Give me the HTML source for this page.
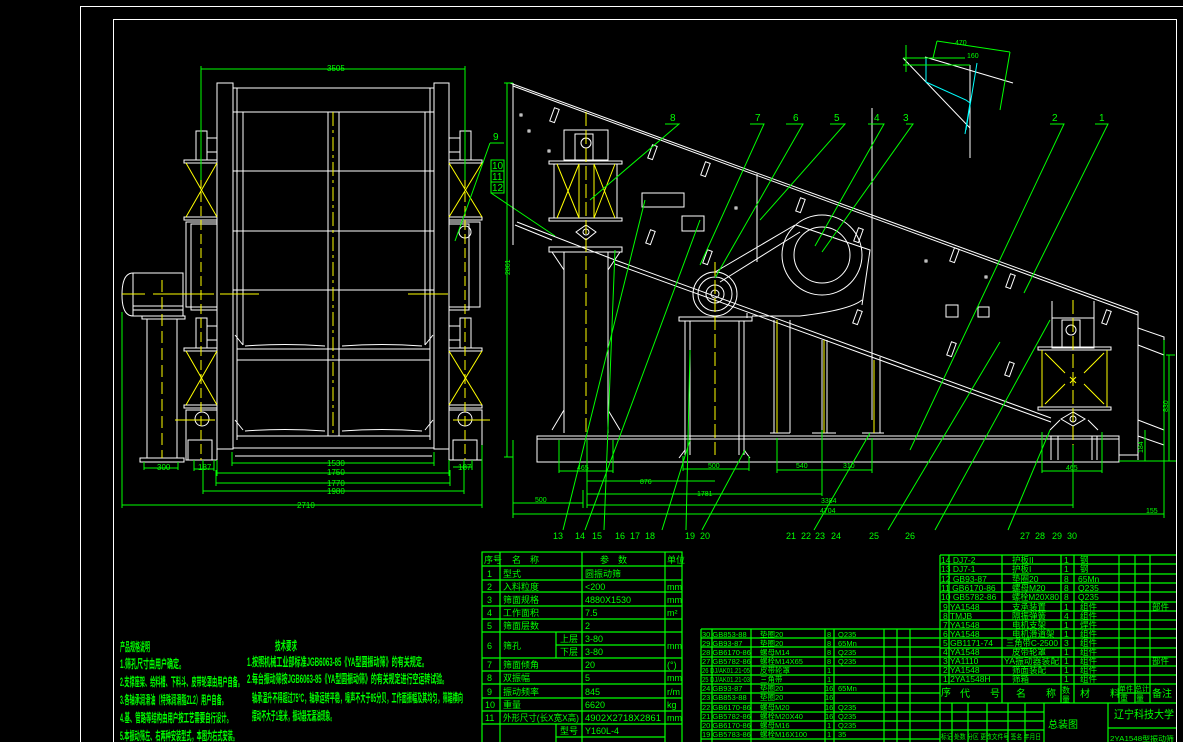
<!DOCTYPE html>
<html><head><meta charset="utf-8"><style>
html,body{margin:0;padding:0;background:#000;width:1183px;height:742px;overflow:hidden}
svg{display:block}
text{font-family:"Liberation Sans","Noto Sans CJK SC",sans-serif;fill:#00ff00}
.n text{font-weight:bold}
</style></head><body>
<svg width="1183" height="742" viewBox="0 0 1183 742" xmlns="http://www.w3.org/2000/svg">
<rect width="1183" height="742" fill="#000"/>
<g stroke="#fff" fill="none" stroke-width="1">
<path d="M80.5 742V6.5H1183"/>
<path d="M113.5 742V19.5H1176.5V742"/>
</g>

<!-- ============ END VIEW ============ -->
<g stroke="#fff" fill="none" stroke-width="1">
<rect x="217" y="83" width="16" height="366"/>
<rect x="434" y="83" width="15" height="366"/>
<path d="M233 88H434M233 112H434M237 88V440M430 88V440M243 112V345M425 112V345"/>
<path d="M233 171H434M233 231H434M233 290H434M237 349H430M237 360H430M237 436H430M233 448H434M235 456H432"/>
<path d="M328 112V436M339 112V436"/>
<path d="M243 345l-8-10M425 345l8-10M243 430l-8-10M425 430l8-10"/>
<path d="M245 346q40-3 80 0M342 346q40-3 80 0M245 431q40-3 80 0M342 431q40-3 80 0"/>
<rect x="184" y="160" width="33" height="3"/><rect x="184" y="217" width="33" height="3"/>
<rect x="184" y="348" width="33" height="3"/><rect x="184" y="405" width="33" height="3"/>
<rect x="196" y="131" width="11" height="29"/><rect x="196" y="318" width="11" height="30"/>
<rect x="207" y="138" width="10" height="14"/><rect x="207" y="326" width="10" height="14"/>
<rect x="186" y="222" width="31" height="85"/><rect x="191" y="224" width="26" height="86"/>
<rect x="186" y="410" width="31" height="50"/>
<circle cx="202" cy="419" r="7"/>
<rect x="188" y="440" width="24" height="20"/>
<rect x="449" y="160" width="33" height="3"/><rect x="449" y="217" width="33" height="3"/>
<rect x="449" y="348" width="33" height="3"/><rect x="449" y="405" width="33" height="3"/>
<rect x="460" y="131" width="11" height="29"/><rect x="460" y="318" width="11" height="30"/>
<rect x="449" y="138" width="11" height="14"/><rect x="449" y="326" width="11" height="14"/>
<rect x="449" y="222" width="31" height="85"/><rect x="449" y="224" width="20" height="86"/>
<rect x="449" y="410" width="33" height="50"/>
<circle cx="465" cy="419" r="7"/><circle cx="465" cy="232" r="6"/>
<rect x="453" y="440" width="24" height="20"/>
<path d="M133 273H183V316H133Q122 316 122 295Q122 273 133 273Z"/>
<path d="M133 273V316M133 306H183M133 310H183"/>
<rect x="142" y="316" width="43" height="3"/>
<rect x="147" y="319" width="30" height="139"/>
<rect x="140" y="458" width="44" height="4"/>
</g>
<g stroke="#ffff00" fill="none" stroke-width="1">
<path d="M333 112V436" stroke-dasharray="14 4 3 4"/>
<path d="M186 163L217 217M217 163L186 217M186 351L217 405M217 351L186 405"/>
<path d="M449 163L482 217M482 163L449 217M449 351L482 405M482 351L449 405"/>
<path d="M201 150V460M465 150V460" stroke-dasharray="10 4"/>
<path d="M122 294H145M153 294H214M220 294H259M408 294H448M175 420H215M453 420H490"/>
<path d="M162 280V458" stroke-dasharray="12 5"/>
</g>
<g stroke="#00ff00" fill="none" stroke-width="1">
<path d="M201 69H465M201 66V180M465 66V180"/>
<path d="M122 505H482M122 312V508M482 445V508"/>
<path d="M232 463H434M232 452V466M434 452V466"/>
<path d="M217 473H449M217 460V476M449 460V476"/>
<path d="M216 483H450M216 470V486M450 470V486"/>
<path d="M203 491H464M203 460V494M464 460V494"/>
<path d="M144 468H178M144 462V470M178 462V470M194 469H214M194 460V471M214 460V471M453 467H472M472 460V470"/>
<path d="M490 143H504M490 143L455 241M491 160H504V193H491ZM491 171H504M491 182H504M491 193L555 236"/>
</g>
<g font-size="8">
<text x="327" y="71">3505</text><text x="297" y="508">2710</text>
<text x="327" y="466">1530</text><text x="327" y="475">1750</text><text x="327" y="486">1770</text><text x="327" y="494">1980</text>
<text x="157" y="470">300</text><text x="198" y="470">187</text><text x="458" y="470">187</text>
</g>
<g font-size="10"><text x="493" y="140">9</text><text x="492" y="169">10</text><text x="492" y="180">11</text><text x="492" y="191">12</text></g>

<!-- ============ SIDE VIEW ============ -->
<g stroke="#fff" fill="none" stroke-width="1">
<path d="M510 83L1138 312M513 86L1138 315M513 83V245M1138 312V460"/>
<path d="M517 222L615 260M615 260L1051 418M615 264L1051 422M515 225L552 240"/>
<path d="M1138 328L1164 337V355M1138 345L1164 355M1138 420L1164 430V445M1138 436L1164 445"/>
<rect x="537" y="436" width="582" height="26"/>
<path d="M537 439H1119M1119 455H1138"/>
<rect x="564" y="130" width="44" height="30"/>
<rect x="575" y="134" width="18" height="26"/>
<circle cx="586" cy="143" r="5"/>
<rect x="549" y="161" width="73" height="3"/><rect x="549" y="218" width="73" height="3"/>
<rect x="554" y="164" width="63" height="54"/>
<path d="M576 232L586 225L596 232L586 240Z"/><circle cx="586" cy="232" r="3"/>
<rect x="549" y="247" width="73" height="5"/>
<path d="M564 252V433M608 252V433M552 252L564 270M620 252L608 270M552 430L564 410M620 430L608 410"/>
<circle cx="715" cy="294" r="22"/><circle cx="715" cy="294" r="17"/><circle cx="715" cy="294" r="9"/><circle cx="715" cy="294" r="4"/>
<rect x="679" y="317" width="73" height="4"/>
<path d="M685 321V455M744 321V455M690 321V455M739 321V455M679 458L685 450M750 458L744 450"/>
<path d="M747 313V318"/>
<path d="M715 272L795 225M720 282L800 232"/>
<circle cx="822" cy="255" r="40"/><circle cx="822" cy="255" r="28"/>
<path d="M796 225L870 250L862 305M752 316H800Q850 310 862 300"/>
<path d="M774 320V433M822 340V433M872 108V420M880 357V433M790 320V433M827 340V433"/>
<path d="M770 433H790M812 433H836M862 433H884"/>
<path d="M757 174V262"/>
<rect x="1052" y="318" width="42" height="30"/>
<rect x="1062" y="320" width="18" height="28"/>
<circle cx="1071" cy="330" r="5"/>
<rect x="1038" y="347" width="73" height="3"/><rect x="1038" y="407" width="73" height="3"/>
<rect x="1042" y="350" width="65" height="57"/>
<path d="M1061 419L1073 412L1085 419L1073 426Z"/><circle cx="1073" cy="419" r="3"/>
<path d="M1052 301V347M1094 301V347M1050 430L1060 420M1098 430L1088 420M1051 436V460M1097 436V460M1058 436V460M1092 436V460"/>
<g>
<rect x="552" y="108" width="5" height="14" transform="rotate(20 554 115)"/>
<rect x="650" y="145" width="5" height="14" transform="rotate(20 652 152)"/>
<rect x="703" y="162" width="5" height="14" transform="rotate(20 705 169)"/>
<rect x="648" y="230" width="5" height="14" transform="rotate(20 650 237)"/>
<rect x="705" y="250" width="5" height="14" transform="rotate(20 707 257)"/>
<rect x="798" y="198" width="5" height="14" transform="rotate(20 800 205)"/>
<rect x="856" y="228" width="5" height="14" transform="rotate(20 858 235)"/>
<rect x="855" y="310" width="5" height="14" transform="rotate(20 857 317)"/>
<rect x="952" y="248" width="5" height="14" transform="rotate(20 954 255)"/>
<rect x="1008" y="274" width="5" height="14" transform="rotate(20 1010 281)"/>
<rect x="949" y="342" width="5" height="14" transform="rotate(20 951 349)"/>
<rect x="1007" y="362" width="5" height="14" transform="rotate(20 1009 369)"/>
<rect x="1104" y="310" width="5" height="14" transform="rotate(20 1106 317)"/>
<rect x="642" y="193" width="42" height="14"/><rect x="682" y="216" width="22" height="15"/>
<rect x="946" y="305" width="12" height="12"/><rect x="978" y="307" width="11" height="10"/>
<rect x="520" y="114" width="2" height="2"/><rect x="528" y="130" width="2" height="2"/><rect x="548" y="150" width="2" height="2"/>
<rect x="735" y="207" width="2" height="2"/><rect x="925" y="260" width="2" height="2"/><rect x="985" y="276" width="2" height="2"/>
</g>
<path d="M925 57L1013 83M903 58L970 128M970 65V158"/>
</g>
<g stroke="#00ffff" fill="none" stroke-width="1"><path d="M916 58H926V82L966 100L970 103L965 134M977 63L966 130"/></g>
<g stroke="#ffff00" fill="none" stroke-width="1">
<path d="M586 112V433M715 262V455M1073 300V460" stroke-dasharray="14 4"/>
<path d="M579 164V218M594 164V218M557 164L579 218M579 164L557 218M594 164L615 218M615 164L594 218"/>
<path d="M1042 350V407M1107 350V407M1045 353L1065 373M1104 353L1084 373M1045 404L1065 384M1104 404L1084 384M1070 377l6 6M1076 377l-6 6"/>
<path d="M777 320V433M824 340V433M874 360V433"/>
</g>
<g stroke="#00ff00" fill="none" stroke-width="1">
<path d="M507 83V457M504 83H513M504 457H513"/>
<path d="M513 514H1164M513 440V518M1164 340V518"/>
<path d="M513 503H583M583 490V508"/>
<path d="M587 505H1073M587 440V508M1073 445V508"/>
<path d="M587 494H822M822 430V496M587 481H715"/>
<path d="M559 471H613M559 440V473M613 440V473M683 469H749M683 456V471M749 456V471M777 470H872M777 438V473M872 438V473M1042 471H1102M1042 432V473M1102 432V473"/>
<path d="M1119 461H1176M1169 355V461M1166 355H1175M1145 430V461"/>
<path d="M937 41L1010 52M937 41L933 58M1010 52L1000 110M903 58H965M903 65H970M906 45V72"/>
<path d="M665 124H679L590 200M750 124H764L700 265M786 124H803L715 278M830 124H845L760 220M868 124H884L815 246M906 124H913L822 252M1050 124H1064L910 450M1095 124H1108L1024 293"/>
<path d="M563 530L645 200M585 530L700 220M604 530L615 250M662 530L690 440M686 530L690 350M702 530L745 450M814 530L870 433M888 530L1000 342M935 530L1050 320M1008 530L1050 430"/>
</g>
<g font-size="10">
<text x="670" y="121">8</text><text x="755" y="121">7</text><text x="793" y="121">6</text><text x="834" y="121">5</text>
<text x="874" y="121">4</text><text x="903" y="121">3</text><text x="1052" y="121">2</text><text x="1099" y="121">1</text>
</g>
<g font-size="9">
<text x="553" y="539">13</text><text x="575" y="539">14</text><text x="592" y="539">15</text><text x="615" y="539">16</text><text x="630" y="539">17</text><text x="645" y="539">18</text>
<text x="685" y="539">19</text><text x="700" y="539">20</text><text x="786" y="539">21</text><text x="801" y="539">22</text><text x="815" y="539">23</text><text x="831" y="539">24</text>
<text x="869" y="539">25</text><text x="905" y="539">26</text><text x="1020" y="539">27</text><text x="1035" y="539">28</text><text x="1052" y="539">29</text><text x="1067" y="539">30</text>
</g>
<g font-size="7">
<text x="535" y="502">500</text><text x="640" y="484">876</text><text x="697" y="496">1781</text><text x="821" y="503">3384</text><text x="820" y="513">4704</text>
<text x="577" y="470">465</text><text x="708" y="468">500</text><text x="796" y="468">540</text><text x="843" y="468">310</text><text x="1066" y="470">465</text>
<text x="1146" y="513">155</text><text x="955" y="45">470</text><text x="967" y="58">160</text>
<text x="0" y="0" transform="translate(510 275) rotate(-90)">2861</text>
<text x="0" y="0" transform="translate(1168 412) rotate(-90)">830</text>
<text x="0" y="0" transform="translate(1143 453) rotate(-90)">184</text>
</g>

<!-- ============ NOTES ============ -->
<g font-size="12" class="n">
<text x="120" y="651" textLength="30" lengthAdjust="spacingAndGlyphs">产品规格说明</text>
<text x="120" y="668" textLength="65" lengthAdjust="spacingAndGlyphs">1.筛孔尺寸由用户确定。</text>
<text x="120" y="686" textLength="123" lengthAdjust="spacingAndGlyphs">2.支撑座架、给料槽、下料斗、皮带轮罩由用户自备。</text>
<text x="120" y="704" textLength="107" lengthAdjust="spacingAndGlyphs">3.各轴承润滑油（特殊润滑脂ZL2）用户自备。</text>
<text x="120" y="722" textLength="112" lengthAdjust="spacingAndGlyphs">4.基、管路等结构由用户按工艺需要自行设计。</text>
<text x="120" y="740" textLength="118" lengthAdjust="spacingAndGlyphs">5.本振动筛左、右两种安装型式，本图为右式安装。</text>
<text x="275" y="650" textLength="22" lengthAdjust="spacingAndGlyphs">技术要求</text>
<text x="247" y="666" textLength="181" lengthAdjust="spacingAndGlyphs">1.按照机械工业部标准JGB6063-85《YA型圆振动筛》的有关规定。</text>
<text x="247" y="683" textLength="201" lengthAdjust="spacingAndGlyphs">2.每台振动筛按JGB6063-85《YA型圆振动筛》的有关规定进行空运转试验。</text>
<text x="252" y="702" textLength="211" lengthAdjust="spacingAndGlyphs">轴承温升不得超过75°C，轴承运转平稳，噪声不大于85分贝，工作面振幅及其均匀，筛箱横向</text>
<text x="252" y="720" textLength="83" lengthAdjust="spacingAndGlyphs">摆动不大于1毫米，振动器无漏油现象。</text>
</g>

<!-- ============ TABLE LEFT ============ -->
<g stroke="#00ff00" fill="none" stroke-width="1.2">
<rect x="482" y="552" width="200" height="200"/>
<path d="M482 566H682M482 580H682M482 592H682M482 606H682M482 619H682M482 632H682M556 645H665M482 658H682M482 671H682M482 684H682M482 698H682M482 711H682M482 724H682M556 737H665"/>
<path d="M500 552V752M582 552V658M582 658V752M665 552V752M556 632V658M556 724V752"/>
</g>
<g font-size="9">
<text x="484" y="563">序号</text><text x="512" y="563">名　称</text><text x="600" y="563">参　数</text><text x="667" y="563">单位</text>
<text x="487" y="577">1</text><text x="503" y="577">型式</text><text x="585" y="577">圆振动筛</text>
<text x="487" y="590">2</text><text x="503" y="590">入料粒度</text><text x="585" y="590">&lt;200</text><text x="667" y="590">mm</text>
<text x="487" y="603">3</text><text x="503" y="603">筛面规格</text><text x="585" y="603">4880X1530</text><text x="667" y="603">mm</text>
<text x="487" y="616">4</text><text x="503" y="616">工作面积</text><text x="585" y="616">7.5</text><text x="667" y="616">m²</text>
<text x="487" y="629">5</text><text x="503" y="629">筛面层数</text><text x="585" y="629">2</text>
<text x="487" y="649">6</text><text x="503" y="649">筛孔</text><text x="560" y="642">上层</text><text x="560" y="655">下层</text><text x="585" y="642">3-80</text><text x="585" y="655">3-80</text><text x="667" y="649">mm</text>
<text x="487" y="668">7</text><text x="503" y="668">筛面倾角</text><text x="585" y="668">20</text><text x="667" y="668">(°)</text>
<text x="487" y="681">8</text><text x="503" y="681">双振幅</text><text x="585" y="681">5</text><text x="667" y="681">mm</text>
<text x="487" y="695">9</text><text x="503" y="695">振动频率</text><text x="585" y="695">845</text><text x="667" y="695">r/m</text>
<text x="485" y="708">10</text><text x="503" y="708">重量</text><text x="585" y="708">6620</text><text x="667" y="708">kg</text>
<text x="485" y="721">11</text><text x="503" y="721" textLength="76" lengthAdjust="spacingAndGlyphs">外形尺寸(长X宽X高)</text><text x="585" y="721" textLength="76" lengthAdjust="spacingAndGlyphs">4902X2718X2861</text><text x="667" y="721">mm</text>
<text x="560" y="734">型号</text><text x="585" y="734">Y160L-4</text>
</g>

<!-- ============ TABLE MIDDLE ============ -->
<g stroke="#00ff00" fill="none" stroke-width="1.2">
<path d="M701 629H940M701 638H940M701 647H940M701 657H940M701 666H940M701 675H940M701 684H940M701 693H940M701 703H940M701 712H940M701 721H940M701 730H940M701 739H940"/>
<path d="M701 629V742M712 629V742M751 629V742M825 629V742M834 629V742M884 629V742M897 629V742M910 629V742"/>
</g>
<g font-size="7.5">
<text x="702" y="637">30 GB853-88</text><text x="760" y="637">垫圈20</text><text x="827" y="637">8</text><text x="838" y="637">Q235</text>
<text x="702" y="646">29 GB93-87</text><text x="760" y="646">垫圈20</text><text x="827" y="646">8</text><text x="838" y="646">65Mn</text>
<text x="702" y="655">28 GB6170-86</text><text x="760" y="655">螺母M14</text><text x="827" y="655">8</text><text x="838" y="655">Q235</text>
<text x="702" y="664">27 GB5782-86</text><text x="760" y="664">螺栓M14X65</text><text x="827" y="664">8</text><text x="838" y="664">Q235</text>
<text x="702" y="673" textLength="48" lengthAdjust="spacingAndGlyphs">26 DJ/AK01.21-05</text><text x="760" y="673">皮带轮罩</text><text x="827" y="673">1</text>
<text x="702" y="682" textLength="48" lengthAdjust="spacingAndGlyphs">25 DJ/AK01.21-03</text><text x="760" y="682">三角带</text><text x="827" y="682">1</text>
<text x="702" y="691">24 GB93-87</text><text x="760" y="691">垫圈20</text><text x="825" y="691">16</text><text x="838" y="691">65Mn</text>
<text x="702" y="700">23 GB853-88</text><text x="760" y="700">垫圈20</text><text x="825" y="700">16</text>
<text x="702" y="710">22 GB6170-86</text><text x="760" y="710">螺母M20</text><text x="825" y="710">16</text><text x="838" y="710">Q235</text>
<text x="702" y="719">21 GB5782-86</text><text x="760" y="719">螺栓M20X40</text><text x="825" y="719">16</text><text x="838" y="719">Q235</text>
<text x="702" y="728">20 GB6170-86</text><text x="760" y="728">螺母M16</text><text x="827" y="728">1</text><text x="838" y="728">Q235</text>
<text x="702" y="737">19 GB5783-86</text><text x="760" y="737">螺栓M16X100</text><text x="827" y="737">1</text><text x="838" y="737">35</text>
</g>

<!-- ============ TABLE RIGHT ============ -->
<g stroke="#00ff00" fill="none" stroke-width="1.2">
<path d="M940 555H1176M940 564H1176M940 574H1176M940 583H1176M940 592H1176M940 602H1176M940 611H1176M940 620H1176M940 629H1176M940 638H1176M940 648H1176M940 657H1176M940 666H1176M940 675H1176M940 684H1176M1119 693H1150M940 703H1176"/>
<path d="M940 555V742M949 555V684M1002 555V703M1061 555V703M1074 555V703M1119 555V703M1135 555V703M1150 555V703"/>
<path d="M940 712H1044M940 721H1044M940 730H1044M952 703V742M968 703V742M987 703V742M1008 703V742M1025 703V742M1044 703V742M1108 703V742M1108 728H1176"/>
</g>
<g font-size="8.5">
<text x="941" y="563">14 DJ7-2</text><text x="1012" y="563">护板II</text><text x="1064" y="563">1</text><text x="1080" y="563">钢</text>
<text x="941" y="572">13 DJ7-1</text><text x="1012" y="572">护板I</text><text x="1064" y="572">1</text><text x="1080" y="572">钢</text>
<text x="941" y="582">12 GB93-87</text><text x="1012" y="582">垫圈20</text><text x="1064" y="582">8</text><text x="1078" y="582">65Mn</text>
<text x="941" y="591">11 GB6170-86</text><text x="1012" y="591">螺母M20</text><text x="1064" y="591">8</text><text x="1078" y="591">Q235</text>
<text x="941" y="600">10 GB5782-86</text><text x="1012" y="600" textLength="47" lengthAdjust="spacingAndGlyphs">螺栓M20X80</text><text x="1064" y="600">8</text><text x="1078" y="600">Q235</text>
<text x="943" y="610">9 YA1548</text><text x="1012" y="610">支承装置</text><text x="1064" y="610">1</text><text x="1080" y="610">组件</text><text x="1152" y="610">部件</text>
<text x="943" y="619">8 TMJB</text><text x="1012" y="619">隔振弹簧</text><text x="1064" y="619">4</text><text x="1080" y="619">组件</text>
<text x="943" y="628">7 YA1548</text><text x="1012" y="628">电机支架</text><text x="1064" y="628">1</text><text x="1080" y="628">焊件</text>
<text x="943" y="637">6 YA1548</text><text x="1012" y="637">电机滑道架</text><text x="1064" y="637">1</text><text x="1080" y="637">组件</text>
<text x="943" y="646">5 GB1171-74</text><text x="1006" y="646" textLength="52" lengthAdjust="spacingAndGlyphs">三角带C-2500</text><text x="1064" y="646">3</text><text x="1080" y="646">组件</text>
<text x="943" y="655">4 YA1548</text><text x="1012" y="655">皮带轮罩</text><text x="1064" y="655">1</text><text x="1080" y="655">组件</text>
<text x="943" y="664">3 YA1110</text><text x="1004" y="664" textLength="55" lengthAdjust="spacingAndGlyphs">YA振动器装配</text><text x="1064" y="664">1</text><text x="1080" y="664">组件</text><text x="1152" y="664">部件</text>
<text x="943" y="673">2 YA1548</text><text x="1012" y="673">筛面装配</text><text x="1064" y="673">1</text><text x="1080" y="673">组件</text>
<text x="943" y="682">1 2YA1548H</text><text x="1012" y="682">筛箱</text><text x="1064" y="682">1</text><text x="1080" y="682">组件</text>
</g>
<g font-size="10">
<text x="941" y="696">序</text><text x="960" y="697">代　　号</text><text x="1016" y="697">名　　称</text><text x="1062" y="693" font-size="8">数</text><text x="1062" y="702" font-size="8">量</text><text x="1080" y="697">材　　料</text><text x="1152" y="697">备注</text>
<text x="1119" y="691" font-size="7" textLength="30" lengthAdjust="spacingAndGlyphs">单件 总计</text><text x="1120" y="701" font-size="8">重　量</text>
<text x="1048" y="728">总装图</text>
<text x="1114" y="718" font-size="11" textLength="60" lengthAdjust="spacingAndGlyphs">辽宁科技大学</text>
</g>
<g font-size="7"><text x="941" y="739" textLength="100" lengthAdjust="spacingAndGlyphs">标记 处数 分区 更改文件号 签名 年月日</text><text x="1110" y="741" textLength="64" lengthAdjust="spacingAndGlyphs">2YA1548型振动筛</text></g>
</svg>
</body></html>
